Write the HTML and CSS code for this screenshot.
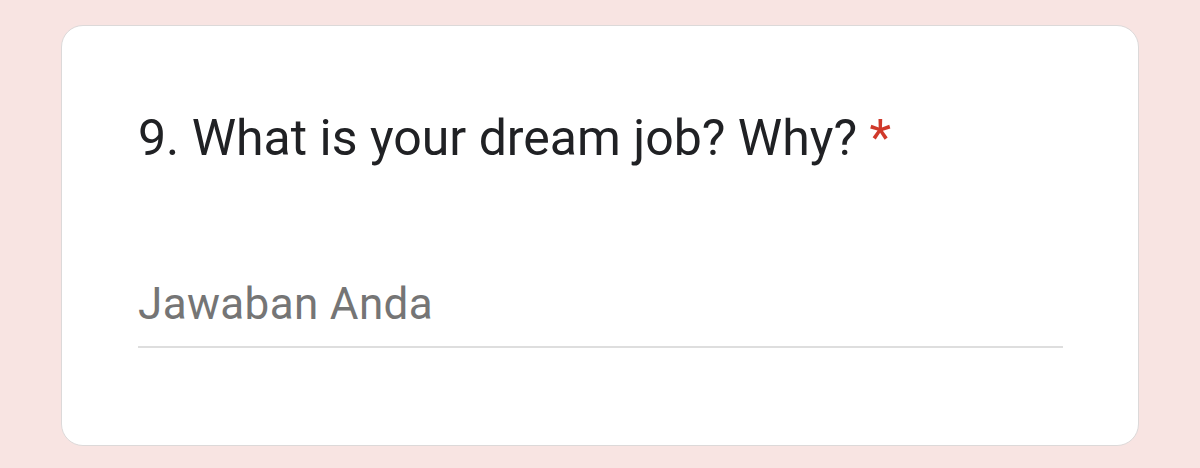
FILE: index.html
```html
<!doctype html>
<html>
<head>
<meta charset="utf-8">
<link rel="stylesheet" href="styles.css">
</head>
<body>
<div class="card">
    <div class="question">9. What is your dream job? Why? <span class="required">*</span></div>
    <div class="answer">
        <input type="text" class="answer-input" placeholder="Jawaban Anda">
    </div>
</div>
</body>
</html>
```

FILE: styles.css
```css
body {
    margin: 0;
    background: #f8e4e2;
    font-family: Roboto, "Liberation Sans", sans-serif;
}
.card {
    box-sizing: border-box;
    margin: 25px 0 0 61px;
    width: 1078px;
    height: 421px;
    background: #fff;
    border: 1px solid #dcd9d9;
    border-radius: 22px;
    padding: 82px 76px 0 76px;
}
.question {
    font-size: 50px;
    line-height: 60px;
    color: #202124;
}
.required { color: #d0392b; }
.answer {
    margin-top: 110px;
    width: 925px;
    border-bottom: 2px solid #dedede;
    padding-bottom: 16px;
}
.answer-input {
    display: block;
    width: 100%;
    border: 0;
    padding: 0;
    margin: 0;
    outline: none;
    font-family: Roboto, "Liberation Sans", sans-serif;
    font-size: 44px;
    letter-spacing: 0.35px;
    line-height: 52px;
    height: 52px;
    color: #202124;
    background: transparent;
}
.answer-input::placeholder { color: #757575; }
```
